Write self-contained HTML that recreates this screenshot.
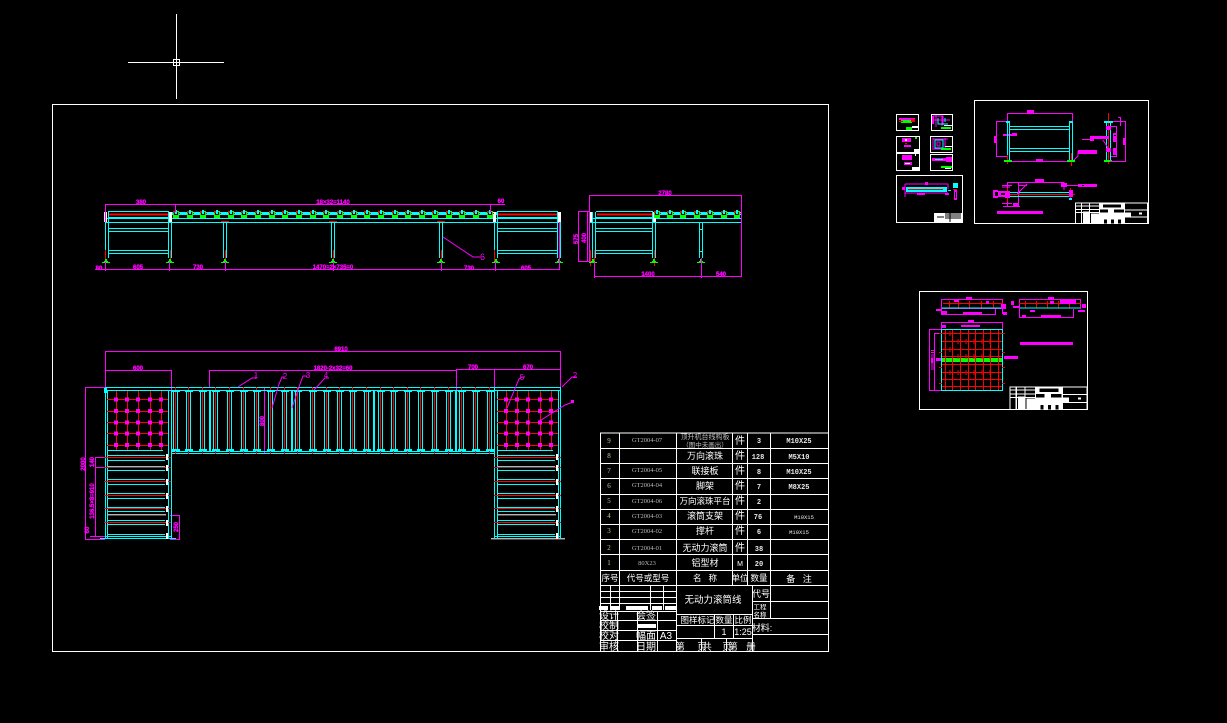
<!DOCTYPE html>
<html><head><meta charset="utf-8"><style>
html,body{margin:0;padding:0;background:#000;width:1227px;height:723px;overflow:hidden}
svg{display:block}
.t{font-family:"Liberation Sans","WenQuanYi Zen Hei","Noto Sans CJK SC",sans-serif;fill:#fff;text-anchor:middle;font-size:9px}
.c{font-family:"Liberation Serif",serif;fill:#b8b8b8;text-anchor:middle;font-size:6.5px}
.n{font-family:"Liberation Serif",serif;fill:#c8c8a0;text-anchor:middle;font-size:7px}
.m{font-family:"Liberation Mono",monospace;fill:#e8e8e8;text-anchor:middle;font-size:7px;font-weight:bold}
.d{font-family:"Liberation Sans",sans-serif;fill:#f0f;stroke:#f0f;stroke-width:.3px;text-anchor:middle;font-size:6px;font-weight:bold}
.l{font-family:"Liberation Sans",sans-serif;fill:#f0f;text-anchor:middle;font-size:8px}
</style></head><body>
<svg width="1227" height="723" viewBox="0 0 1227 723" xmlns="http://www.w3.org/2000/svg" fill="none" stroke-width="1">
<defs>
<g id="r" shape-rendering="crispEdges">
<rect x="-3" y="-4" width="6" height="7" fill="#0f0"/><rect x="-2" y="-3" width="4" height="3" fill="#000"/><rect x="-1" y="-5" width="2" height="4" fill="#0ff"/><rect x="-3" y="-4" width="2" height="2" fill="#f00"/><rect x="3" y="-2" width="1" height="1" fill="#f00"/>
</g>
<g id="f" shape-rendering="crispEdges"><rect x="-4" y="2" width="8" height="1" fill="#0f0"/><rect x="-2" y="1" width="4" height="1" fill="#0f0"/><rect x="-1" y="-1" width="2" height="3" fill="#0f0"/></g>
<g id="c" shape-rendering="crispEdges">
<path d="M-2.5 390V451M1.5 390V451" stroke="#0ff"/><path d="M-.5 387V454" stroke="#f00"/>
<rect x="-4" y="390" width="8" height="2" fill="#0ff"/><rect x="-4" y="449" width="8" height="2" fill="#0ff"/>
</g>
<rect id="s" x="-2" y="-2" width="4" height="4" fill="#f0f"/>
<g id="grid" shape-rendering="crispEdges">
<path d="M0 399.5H61M0 411.5H61M0 422.5H61M0 433.5H61M0 445.5H61M9.5 391V451M20.5 391V451M31.5 391V451M43.5 391V451M54.5 391V451" stroke="#f00"/>
<use href="#s" x="9" y="399.5"/><use href="#s" x="20" y="399.5"/><use href="#s" x="31" y="399.5"/><use href="#s" x="43" y="399.5"/><use href="#s" x="54" y="399.5"/>
<use href="#s" x="9" y="411"/><use href="#s" x="20" y="411"/><use href="#s" x="31" y="411"/><use href="#s" x="43" y="411"/><use href="#s" x="54" y="411"/>
<use href="#s" x="9" y="422.5"/><use href="#s" x="20" y="422.5"/><use href="#s" x="31" y="422.5"/><use href="#s" x="43" y="422.5"/><use href="#s" x="54" y="422.5"/>
<use href="#s" x="9" y="433.5"/><use href="#s" x="20" y="433.5"/><use href="#s" x="31" y="433.5"/><use href="#s" x="43" y="433.5"/><use href="#s" x="54" y="433.5"/>
<use href="#s" x="9" y="445"/><use href="#s" x="20" y="445"/><use href="#s" x="31" y="445"/><use href="#s" x="43" y="445"/><use href="#s" x="54" y="445"/>
</g>
<g id="rows" shape-rendering="crispEdges">
<path d="M3 450.5H58M3 455.5H60M3 460.5H60M3 466.5H60M3 470.5H60M3 479.5H60M3 484.5H60M3 493.5H60M3 498.5H60M3 507.5H60M3 511.5H60M3 520.5H60M3 524.5H60M3 534.5H60M3 538.5H60" stroke="#0ff"/>
<path d="M-1 457.5H66M-1 467.5H66M-1 481.5H66M-1 495.5H66M-1 508.5H66M3 515.5H61M-1 522.5H66" stroke="#f00"/>
<path d="M3 514.5H61" stroke="#0ff"/>
<rect x="61" y="454" width="2" height="6" fill="#fff"/><rect x="61" y="465" width="2" height="6" fill="#fff"/><rect x="61" y="479" width="2" height="6" fill="#fff"/><rect x="61" y="493" width="2" height="6" fill="#fff"/><rect x="61" y="506" width="2" height="6" fill="#fff"/><rect x="61" y="520" width="2" height="6" fill="#fff"/><rect x="61" y="533" width="2" height="6" fill="#fff"/>
</g>
<g id="sec" shape-rendering="crispEdges">
<path d="M.5 212V258M3.5 212V258M63.5 218V258M66.5 218V258" stroke="#0ff"/>
<path d="M3 211.5H63M3 217.5H66M3 228.5H63M3 231.5H63M3 250.5H63M3 253.5H63M63.5 211V217" stroke="#0ff"/>
<path d="M4 214.5H63" stroke="#f00" stroke-width="2"/>
<path d="M.5 250V262M65.5 250V262" stroke="#f00"/>
<rect x="-1" y="212" width="3" height="10" fill="#fff"/><rect x="64" y="212" width="3" height="10" fill="#fff"/>
</g>
<g id="tb" shape-rendering="crispEdges">
<path d="M.5 0V21M72.5 0V21M0 .5H73M0 7H24M0 10H24M0 3.5H24M6.5 0V21M14.5 0V21M24.5 0V21M49.5 0V21M0 21H73M50 7.5H73M50 14.5H73" stroke="#fff"/>
<rect x="8" y="9" width="6" height="12" fill="#fff"/><rect x="16" y="11" width="8" height="10" fill="#fff"/>
<rect x="25" y="0" width="24" height="16" fill="#fff"/><rect x="28" y="2" width="18" height="3" fill="#000"/><rect x="25" y="7" width="8" height="3" fill="#000"/><rect x="39" y="7" width="10" height="3" fill="#000"/>
<rect x="25" y="16" width="24" height="5" fill="#fff"/><rect x="29" y="17" width="3" height="4" fill="#000"/><rect x="36" y="17" width="3" height="4" fill="#000"/><rect x="43" y="17" width="3" height="4" fill="#000"/>
<rect x="50" y="10" width="6" height="4" fill="#fff"/><rect x="64" y="10" width="3" height="2" fill="#fff"/>
</g>
</defs>
<rect width="1227" height="723" fill="#000"/>

<!-- crosshair -->
<g stroke="#fff" shape-rendering="crispEdges"><path d="M128 62.5H224M176.5 14V99"/><rect x="173.5" y="59.5" width="6" height="6"/></g>

<!-- sheet frame -->
<rect x="52.5" y="104.5" width="776" height="547" stroke="#fff" shape-rendering="crispEdges"/>

<!-- ELEVATION 1 -->
<g shape-rendering="crispEdges">
<rect x="170" y="212" width="327" height="3" fill="#0ff"/>
<path d="M105 218.5H561M105 222.5H561" stroke="#0ff"/>
<path d="M223.5 222V258M226.5 222V258M331.5 222V258M334.5 222V258M439.5 222V258M442.5 222V258" stroke="#0ff"/>
<path d="M225.5 250V262M333.5 250V262M441.5 250V262M221 221.5H229M329 221.5H337M437 221.5H445" stroke="#f00"/>
</g>
<use href="#sec" x="105"/><use href="#sec" x="494"/>
<use href="#r" x="176" y="215"/><use href="#r" x="190" y="215"/><use href="#r" x="203" y="215"/><use href="#r" x="217" y="215"/><use href="#r" x="231" y="215"/><use href="#r" x="244" y="215"/><use href="#r" x="258" y="215"/><use href="#r" x="272" y="215"/><use href="#r" x="285" y="215"/><use href="#r" x="299" y="215"/><use href="#r" x="313" y="215"/><use href="#r" x="326" y="215"/><use href="#r" x="340" y="215"/><use href="#r" x="354" y="215"/><use href="#r" x="367" y="215"/><use href="#r" x="381" y="215"/><use href="#r" x="395" y="215"/><use href="#r" x="408" y="215"/><use href="#r" x="422" y="215"/><use href="#r" x="435" y="215"/><use href="#r" x="449" y="215"/><use href="#r" x="462" y="215"/><use href="#r" x="476" y="215"/><use href="#r" x="490" y="215"/>
<use href="#f" x="106" y="260"/><use href="#f" x="170" y="260"/><use href="#f" x="225" y="260"/><use href="#f" x="333" y="260"/><use href="#f" x="441" y="260"/><use href="#f" x="496" y="260"/><use href="#f" x="559" y="260"/>
<g stroke="#f0f" shape-rendering="crispEdges"><path d="M105 204.5H490M105.5 204V222M175.5 204V212M490.5 204V212M488 204.5H505M95 269.5H560M105.5 262V271M169.5 262V271M225.5 262V271M333.5 262V271M441.5 262V271M495.5 262V271M559.5 222V270"/></g>
<text class="d" x="141" y="204">380</text><text class="d" x="333" y="204">18×32=1140</text><text class="d" x="501" y="203">60</text><text class="d" x="99" y="270">80</text><text class="d" x="138" y="269">605</text><text class="d" x="198" y="269">730</text><text class="d" x="333" y="269">1470=2×735=0</text><text class="d" x="469" y="270">730</text><text class="d" x="526" y="270">605</text>
<path d="M443 237L473 257H480" stroke="#f0f"/><text class="l" x="482.5" y="260" style="font-size:9px">6</text>

<!-- ELEVATION 2 -->
<g shape-rendering="crispEdges">
<rect x="656" y="212" width="85" height="3" fill="#0ff"/>
<path d="M589 218.5H741M589 222.5H741" stroke="#0ff"/>
<path d="M592.5 212V258M595.5 212V258M699.5 222V258M702.5 222V258" stroke="#0ff"/>
<path d="M596 211.5H652M596 217.5H655M596 228.5H652M596 231.5H652M596 250.5H652M596 253.5H652M652.5 211V258M655.5 218V258M699 229.5H703M699 251.5H703" stroke="#0ff"/>
<path d="M597 214.5H652" stroke="#f00" stroke-width="2"/>
<path d="M590.5 250V266M594.5 250V262M654.5 250V266" stroke="#f00"/>
<rect x="589" y="212" width="3" height="10" fill="#fff"/><rect x="653" y="212" width="3" height="10" fill="#fff"/>
</g>
<use href="#r" x="657" y="215"/><use href="#r" x="670" y="215"/><use href="#r" x="683" y="215"/><use href="#r" x="697" y="215"/><use href="#r" x="710" y="215"/><use href="#r" x="724" y="215"/><use href="#r" x="737" y="215"/>
<use href="#f" x="593" y="260"/><use href="#f" x="654" y="260"/><use href="#f" x="701" y="260"/>
<g stroke="#f0f" shape-rendering="crispEdges"><path d="M589 195.5H741M589.5 195V262M741.5 195V277M578.5 211V262M578 211.5H590M578 261.5H590M587.5 211V262M594 276.5H741M594.5 262V278M701.5 258V278"/></g>
<text class="d" x="665" y="195">2780</text><text class="d" x="578" y="239" transform="rotate(-90 578 239)">575</text><text class="d" x="586" y="238" transform="rotate(-90 586 238)">400</text><text class="d" x="648" y="276">1400</text><text class="d" x="721" y="276">540</text>

<!-- PLAN -->
<g stroke="#f0f" shape-rendering="crispEdges"><path d="M105 351.5H560M105.5 351V388M105 370.5H172M171.5 370V390M209.5 370V388M209 370.5H456M456.5 369V390M456 369.5H560M494.5 369V388M560.5 351V388M85.5 387V539M85 387.5H107M85 539.5H105M95.5 457V536M95 457.5H105M95 467.5H105M90 536.5H105M170 515.5H179M179.5 515V540M170 539.5H179M250 387.5H264M250 453.5H264M264.5 387V454"/></g>
<text class="d" x="341" y="351">6910</text><text class="d" x="138" y="370">600</text><text class="d" x="333" y="370">1820-2x32=60</text><text class="d" x="473" y="369">700</text><text class="d" x="528" y="369">670</text>
<text class="d" x="85" y="464" transform="rotate(-90 85 464)">2000</text><text class="d" x="94" y="462" transform="rotate(-90 94 462)">140</text><text class="d" x="94" y="501" transform="rotate(-90 94 501)">136.5×8=910</text><text class="d" x="89" y="530" transform="rotate(-90 89 530)">60</text><text class="d" x="178" y="527" transform="rotate(-90 178 527)">250</text><text class="d" x="264" y="421" transform="rotate(-90 264 421)">800</text>
<g shape-rendering="crispEdges">
<path d="M105 387.5H561M105 390.5H561M171 451.5H495M171 453.5H495" stroke="#0ff"/>
<path d="M105.5 388V539M107.5 390V539M168.5 390V539M171.5 390V539M494.5 388V539M497.5 390V539M558.5 390V539M560.5 388V539M100 538.5H176M491 538.5H565M105 536.5H172M494 536.5H561" stroke="#0ff"/>
<path d="M491 539.5H565" stroke="#f00"/>
<rect x="104" y="388" width="3" height="5" fill="#0ff"/>
</g>
<use href="#c" x="176" y="0"/><use href="#c" x="189" y="0"/><use href="#c" x="203" y="0"/><use href="#c" x="216" y="0"/><use href="#c" x="230" y="0"/><use href="#c" x="244" y="0"/><use href="#c" x="257" y="0"/><use href="#c" x="271" y="0"/><use href="#c" x="285" y="0"/><use href="#c" x="298" y="0"/><use href="#c" x="313" y="0"/><use href="#c" x="327" y="0"/><use href="#c" x="340" y="0"/><use href="#c" x="353" y="0"/><use href="#c" x="367" y="0"/><use href="#c" x="381" y="0"/><use href="#c" x="394" y="0"/><use href="#c" x="408" y="0"/><use href="#c" x="421" y="0"/><use href="#c" x="435" y="0"/><use href="#c" x="449" y="0"/><use href="#c" x="462" y="0"/><use href="#c" x="476" y="0"/><use href="#c" x="490" y="0"/>
<g shape-rendering="crispEdges"><rect x="209" y="390" width="2" height="61" fill="#0ff"/><rect x="291" y="390" width="2" height="61" fill="#0ff"/><rect x="373" y="390" width="2" height="61" fill="#0ff"/><rect x="455" y="390" width="2" height="61" fill="#0ff"/></g>
<use href="#grid" x="107"/><use href="#grid" x="497"/>
<use href="#rows" x="105"/><use href="#rows" x="495"/>
<g stroke="#f0f"><path d="M238 387L252 378H256M256 375V379M272 408L279 384L282 377H285M292 408L300 384L303 376H307M314 390L325 378H329M507 408L519 379L522 377H525M562 387L572 377H577M538 422L565 405L573 402"/></g>
<text class="l" x="256" y="378">1</text><text class="l" x="285" y="379">2</text><text class="l" x="308" y="378">3</text><text class="l" x="326" y="378">4</text><text class="l" x="522" y="380">5</text><text class="l" x="575" y="378">2</text>
<rect x="571" y="400" width="3" height="3" fill="#f0f"/>

<!-- TABLE -->
<g stroke="#fff" shape-rendering="crispEdges">
<path d="M600.5 433H828.5V651.5H600.5ZM600 448.5H828M600 463.5H828M600 478.5H828M600 494.5H828M600 509.5H828M600 524.5H828M600 539.5H828M600 554.5H828M600 570.5H828M600 585.5H828"/>
<path d="M619.5 433V585M676.5 433V651M732.5 433V585M747.5 433V585M770.5 433V618"/>
<path d="M600 591.5H677M600 597.5H677M600 603.5H677M610.5 585V610M619.5 585V610M650.5 585V610M663.5 585V610M600 611.5H677M600 620.5H677M600 630.5H677M600 640.5H677M617.5 611V651M637.5 611V651M657.5 611V651"/>
<path d="M752.5 585V651M677 614.5H752M677 625.5H752M677 638.5H752M714.5 614V638M733.5 614V638M701.5 638V651M726.5 638V651M752 601.5H828M752 618.5H828M752 634.5H828"/>
</g>
<g shape-rendering="crispEdges" fill="#fff"><rect x="599" y="606" width="9" height="4"/><rect x="611" y="606" width="8" height="4"/><rect x="626" y="606" width="22" height="4"/><rect x="652" y="606" width="10" height="4"/><rect x="665" y="606" width="11" height="4"/><rect x="637" y="624" width="19" height="4"/></g>
<g>
<text class="t" x="705" y="439" style="font-size:7px;fill:#bbb">顶升机台线构板</text><text class="t" x="705" y="447" style="font-size:6.5px;fill:#bbb">（图中未画出）</text>
<text class="t" x="705" y="459">万向滚珠</text><text class="t" x="705" y="474">联接板</text><text class="t" x="705" y="489">脚架</text><text class="t" x="705" y="504" style="font-size:8.5px">万向滚珠平台</text><text class="t" x="705" y="519">滚筒支架</text><text class="t" x="705" y="534">撑杆</text><text class="t" x="705" y="551">无动力滚筒</text><text class="t" x="705" y="566">铝型材</text>
<text class="t" x="740" y="444" style="font-size:10px">件</text><text class="t" x="740" y="459" style="font-size:10px">件</text><text class="t" x="740" y="474" style="font-size:10px">件</text><text class="t" x="740" y="489" style="font-size:10px">件</text><text class="t" x="740" y="504" style="font-size:10px">件</text><text class="t" x="740" y="519" style="font-size:10px">件</text><text class="t" x="740" y="534" style="font-size:10px">件</text><text class="t" x="740" y="551" style="font-size:10px">件</text><text class="t" x="740" y="566" style="font-size:7px">M</text>
<text class="n" x="609" y="443">9</text><text class="n" x="609" y="458">8</text><text class="n" x="609" y="473">7</text><text class="n" x="609" y="488">6</text><text class="n" x="609" y="503">5</text><text class="n" x="609" y="518">4</text><text class="n" x="609" y="533">3</text><text class="n" x="609" y="550">2</text><text class="n" x="609" y="565">1</text>
<text class="c" x="647" y="442">GT2004-07</text><text class="c" x="647" y="472">GT2004-05</text><text class="c" x="647" y="487">GT2004-04</text><text class="c" x="647" y="503">GT2004-06</text><text class="c" x="647" y="518">GT2004-03</text><text class="c" x="647" y="533">GT2004-02</text><text class="c" x="647" y="550">GT2004-01</text><text class="c" x="647" y="565">80X23</text>
<text class="m" x="759" y="443">3</text><text class="m" x="758" y="459">128</text><text class="m" x="759" y="474">8</text><text class="m" x="759" y="489">7</text><text class="m" x="759" y="504">2</text><text class="m" x="758" y="519">76</text><text class="m" x="759" y="534">6</text><text class="m" x="759" y="551">38</text><text class="m" x="759" y="566">20</text>
<text class="m" x="799" y="443">M10X25</text><text class="m" x="799" y="459">M5X10</text><text class="m" x="799" y="474">M10X25</text><text class="m" x="799" y="489">M8X25</text><text class="m" x="804" y="519" style="font-size:5.5px;font-weight:normal">M10X15</text><text class="m" x="799" y="534" style="font-size:5.5px;font-weight:normal">M10X15</text>
<text class="t" x="610" y="581" style="font-size:8.5px">序号</text><text class="t" x="648" y="581" style="font-size:8.5px">代号或型号</text><text class="t" x="705" y="581" style="font-size:8.5px">名&#160;&#160;&#160;称</text><text class="t" x="740" y="581" style="font-size:8.5px">单位</text><text class="t" x="759" y="581" style="font-size:8.5px">数量</text><text class="t" x="799" y="582">备&#160;&#160;&#160;注</text>
<text class="t" x="713" y="603" style="font-size:9.5px">无动力滚筒线</text>
<text class="t" x="761" y="597">代号</text><text class="t" x="760" y="609" style="font-size:6.5px">工程</text><text class="t" x="760" y="617" style="font-size:6.5px">名称</text><text class="t" x="762" y="631">材料:</text>
<text class="t" x="609" y="619" style="font-size:10px">设计</text><text class="t" x="609" y="629" style="font-size:10px">校制</text><text class="t" x="609" y="639" style="font-size:10px">校对</text><text class="t" x="609" y="650" style="font-size:10px">审核</text>
<text class="t" x="646" y="619" style="font-size:10px">会签</text><text class="t" x="646" y="639" style="font-size:10px">幅面</text><text class="t" x="666" y="639" style="font-size:10px">A3</text><text class="t" x="646" y="650" style="font-size:10px">日期</text>
<text class="t" x="689" y="623" style="font-size:8.5px">图样</text><text class="t" x="706" y="623" style="font-size:8.5px">标记</text><text class="t" x="724" y="623" style="font-size:8.5px">数量</text><text class="t" x="743" y="623" style="font-size:8.5px">比例</text>
<text class="t" x="724" y="635">1</text><text class="t" x="743" y="635">1:25</text>
<text class="t" x="680" y="650" style="font-size:9.5px">第</text><text class="t" x="702" y="650" style="font-size:9.5px">页</text><text class="t" x="707" y="650" style="font-size:9.5px">共</text><text class="t" x="727" y="650" style="font-size:9.5px">页</text><text class="t" x="733" y="650" style="font-size:9.5px">第</text><text class="t" x="751" y="650" style="font-size:9.5px">册</text>
</g>

<!-- SMALL THUMBS -->
<g stroke="#fff" shape-rendering="crispEdges"><rect x="896.5" y="114.5" width="22" height="16"/><rect x="931.5" y="114.5" width="21" height="16"/><rect x="896.5" y="136.5" width="23" height="16"/><rect x="930.5" y="136.5" width="22" height="16"/><rect x="896.5" y="153.5" width="23" height="17"/><rect x="930.5" y="154.5" width="22" height="16"/><rect x="896.5" y="175.5" width="66" height="47"/></g>
<g shape-rendering="crispEdges">
<rect x="899" y="118" width="16" height="2" fill="#f0f"/><rect x="901" y="120" width="11" height="3" fill="#0f0"/><rect x="911" y="119" width="4" height="3" fill="#f00"/><rect x="899" y="121" width="4" height="1" fill="#f00"/><rect x="906" y="127" width="6" height="3" fill="#0f0"/><rect x="912" y="126" width="6" height="2" fill="#fff"/>
<path d="M933 116H943V125M933 120H950M936 115V127M942 116V126" stroke="#f0f"/><path d="M938 118V124H948M945 118V122" stroke="#0ff"/><rect x="932" y="116" width="2" height="8" fill="#f0f"/><rect x="941" y="127" width="10" height="2" fill="#0f0"/><rect x="944" y="125" width="8" height="1" fill="#fff"/>
<rect x="902" y="138" width="9" height="4" fill="#f0f"/><rect x="905" y="139" width="2" height="2" fill="#fff"/><rect x="904" y="145" width="7" height="2" fill="#f0f"/><rect x="905" y="143" width="2" height="1" fill="#f00"/><rect x="914" y="149" width="5" height="3" fill="#fff"/><rect x="915" y="137" width="2" height="2" fill="#0f0"/>
<rect x="902" y="155" width="10" height="5" fill="#f0f"/><rect x="904" y="162" width="8" height="3" fill="#f0f"/><rect x="905" y="163" width="5" height="1" fill="#fff"/><rect x="912" y="167" width="7" height="3" fill="#fff"/><rect x="915" y="154" width="1" height="2" fill="#fff"/>
<path d="M933 138V150M945 138V150M933 139H948M934 149H948" stroke="#f0f"/><rect x="935" y="140" width="8" height="8" stroke="#0ff"/><rect x="937" y="142" width="3" height="4" stroke="#f0f"/><rect x="941" y="148" width="10" height="2" fill="#0f0"/><rect x="945" y="146" width="7" height="1" fill="#fff"/>
<rect x="932" y="158" width="14" height="3" fill="#f0f"/><rect x="935" y="159" width="8" height="1" fill="#0ff"/><rect x="946" y="157" width="6" height="5" fill="#f0f"/><rect x="941" y="166" width="11" height="2" fill="#0f0"/><rect x="945" y="168" width="6" height="1" fill="#fff"/>
<path d="M905 184H948V189M905 193H948M905 184V197" stroke="#f0f"/><rect x="906" y="187" width="41" height="5" fill="#0ff"/><rect x="908" y="189" width="35" height="1" fill="#f00"/><rect x="925" y="182" width="3" height="3" fill="#f0f"/><rect x="902" y="187" width="3" height="3" fill="#f0f"/><rect x="917" y="193" width="8" height="2" fill="#f0f"/><rect x="945" y="193" width="4" height="2" fill="#f0f"/><rect x="953" y="183" width="5" height="5" fill="#0ff"/><rect x="954" y="190" width="3" height="10" fill="#f0f"/><rect x="955" y="192" width="1" height="6" fill="#000"/><rect x="948" y="190" width="3" height="1" fill="#0ff"/><rect x="953" y="189" width="4" height="1" fill="#f00"/>
<rect x="934" y="213" width="28" height="9" fill="#fff"/><rect x="945" y="219" width="8" height="4" fill="#fff"/><path d="M945 214H961M945 216H961M945 218H961M950 213V222M937 217H944" stroke="#000"/>
</g>

<!-- BIG THUMB -->
<rect x="974.5" y="100.5" width="174" height="123" stroke="#fff" shape-rendering="crispEdges"/>
<g shape-rendering="crispEdges">
<path d="M1007 113.5H1073M1007.5 113V121M1072.5 113V121M996.5 121V157M996 121.5H1008M996 156.5H1008M1008 161.5H1073" stroke="#f0f"/>
<rect x="1027" y="110" width="7" height="4" fill="#f0f"/><rect x="1003" y="134" width="14" height="2" fill="#f0f"/><rect x="1012" y="133" width="5" height="2" fill="#f0f"/><rect x="994" y="136" width="3" height="7" fill="#f0f"/><rect x="1036" y="159" width="7" height="2" fill="#f0f"/>
<path d="M1007.5 121V160M1009.5 121V160M1069.5 121V160M1072.5 121V160M1010 126.5H1069M1010 129.5H1069M1010 148.5H1069M1010 151.5H1069" stroke="#0ff"/>
<rect x="1006" y="121" width="4" height="2" fill="#0ff"/><rect x="1069" y="121" width="4" height="2" fill="#0ff"/>
<path d="M1007.5 155V164M1071.5 153V166M1108.5 113V164" stroke="#f00"/>
<rect x="1004" y="160" width="8" height="2" fill="#0f0"/><rect x="1067" y="160" width="8" height="2" fill="#0f0"/><rect x="1104" y="160" width="8" height="2" fill="#0f0"/>
<rect x="1104" y="121" width="9" height="2" fill="#0ff"/><path d="M1106.5 123V160M1110.5 123V160" stroke="#0ff"/>
<rect x="1106" y="126" width="5" height="4" fill="#f0f"/><rect x="1106" y="148" width="5" height="4" fill="#f0f"/>
<path d="M1111 126.5H1117M1116.5 126V156M1111 156.5H1117M1113 121.5H1126M1125.5 121V161M1110 161.5H1126M1120.5 117V126M1118 117.5H1121M1082 139.5H1090M1103 140L1108 148" stroke="#f0f"/>
<rect x="1090" y="136" width="19" height="3" fill="#f0f"/><rect x="1090" y="138" width="4" height="3" fill="#f0f"/><rect x="1113" y="133" width="4" height="9" fill="#f0f"/><rect x="1114" y="135" width="2" height="1" fill="#000"/><rect x="1113" y="148" width="4" height="7" fill="#f0f"/><rect x="1123" y="138" width="3" height="7" fill="#f0f"/>
<path d="M1078 151V156L1074 160" stroke="#f0f"/><rect x="1078" y="150" width="16" height="4" fill="#f0f"/><rect x="1094" y="150" width="3" height="4" fill="#f0f"/>
<path d="M1007 182.5H1064M1007.5 182V207M1018.5 182V207M1002 185.5H1012M1002 203.5H1012M1003 206.5H1020M1064 182V190M1067 185.5H1078M1002 187H1010M1018 194H1020" stroke="#f0f"/>
<rect x="1035" y="179" width="9" height="3" fill="#f0f"/>
<path d="M1007 192.5H1072M1007 196.5H1072" stroke="#0ff"/><path d="M1007 194.5H1075M1070.5 188V200M1007.5 188V202" stroke="#f00"/>
<rect x="993" y="190" width="5" height="8" fill="#f0f"/><rect x="995" y="192" width="3" height="4" fill="#000"/><rect x="998" y="191" width="8" height="6" fill="#f0f"/><rect x="1001" y="193" width="4" height="2" fill="#000"/><rect x="1005" y="191" width="5" height="7" fill="#f0f"/><rect x="1069" y="190" width="4" height="7" fill="#f0f"/><rect x="1069" y="198" width="3" height="2" fill="#0ff"/>
<rect x="1078" y="184" width="19" height="3" fill="#f0f"/><rect x="1082" y="185" width="2" height="1" fill="#000"/><rect x="1018" y="185" width="9" height="1" fill="#f0f"/><path d="M1017 194L1027 184" stroke="#f0f"/><rect x="1061" y="183" width="6" height="4" fill="#f0f"/><rect x="1013" y="203" width="5" height="3" fill="#f0f"/>
<rect x="997" y="211" width="46" height="3" fill="#f0f"/>
</g>
<use href="#tb" transform="translate(1075 202.3)"/>

<!-- THIRD THUMB -->
<rect x="919.5" y="291.5" width="168" height="118" stroke="#fff" shape-rendering="crispEdges"/>
<g shape-rendering="crispEdges">
<path d="M941 299.5H1003M941.5 299V315M1002.5 299V314M941 308.5H1003M941 314.5H995M995.5 308V315M1019 299.5H1081M1019.5 299V318M1080.5 299V309M1019 317.5H1073M1073.5 309V318" stroke="#f0f"/>
<path d="M943 303.5H1003M1019 303.5H1081" stroke="#f00"/><path d="M949.5 301V308M958.5 301V308M969.5 301V308M981.5 301V308M993.5 301V308M1025.5 301V308M1036.5 301V308M1047.5 301V308M1058.5 301V308M1069.5 301V308" stroke="#f00"/>
<path d="M942 308H1002M1020 308H1080" stroke="#0ff"/>
<rect x="966" y="297" width="6" height="2" fill="#f0f"/><rect x="1048" y="297" width="6" height="2" fill="#f0f"/><rect x="954" y="299" width="5" height="3" fill="#f0f"/><rect x="986" y="301" width="3" height="3" fill="#f0f"/><rect x="1001" y="304" width="5" height="5" fill="#f0f"/><rect x="1003" y="312" width="4" height="3" fill="#f0f"/><rect x="936" y="309" width="5" height="2" fill="#f0f"/><rect x="942" y="311" width="5" height="3" fill="#f0f"/><rect x="963" y="312" width="19" height="3" fill="#f0f"/><rect x="1011" y="301" width="3" height="4" fill="#f0f"/><rect x="1013" y="306" width="6" height="2" fill="#f0f"/><rect x="1030" y="310" width="5" height="2" fill="#f0f"/><rect x="1041" y="315" width="20" height="2" fill="#f0f"/><rect x="1060" y="300" width="16" height="4" fill="#f0f"/><rect x="1082" y="304" width="4" height="4" fill="#f0f"/><rect x="1078" y="310" width="7" height="2" fill="#f0f"/><rect x="1022" y="315" width="4" height="3" fill="#f0f"/><rect x="1050" y="301" width="4" height="3" fill="#f0f"/>
<path d="M941 322.5H1003M941.5 322V329M1002.5 322V329M929.5 329V391M929 329.5H941M929 390.5H941M934.5 333V390M934 333.5H941" stroke="#f0f"/>
<rect x="968" y="320" width="6" height="2" fill="#f0f"/><rect x="961" y="325" width="19" height="2" fill="#f0f"/><rect x="942" y="325" width="4" height="3" fill="#f0f"/>
<rect x="931" y="358" width="2" height="5" fill="#f0f"/><rect x="931" y="352" width="4" height="1" fill="#f0f"/><rect x="931" y="350" width="4" height="1" fill="#f0f"/><rect x="931" y="354" width="4" height="16" fill="#f0f" opacity=".5"/><rect x="936" y="358" width="5" height="3" fill="#f0f"/>
<rect x="941.5" y="329.5" width="61" height="61" stroke="#0ff"/>
<rect x="942" y="358" width="60" height="4" fill="#0f0"/>
<path d="M942 333.5H1002M942 341.5H1002M942 349.5H1002M942 356.5H1002M942 364.5H1002M942 372.5H1002M942 379.5H1002M942 386.5H1002M945.5 330V390M952.5 330V390M960.5 330V390M968.5 330V390M975.5 330V390M983.5 330V390M990.5 330V390M998.5 330V390" stroke="#f00"/>
<rect x="942" y="356" width="60" height="1" fill="#f00"/><rect x="942" y="364" width="60" height="1" fill="#f00"/>
<path d="M950 331V336M958 339V344M966 339V344M974 339V344M982 339V344M990 339V344M950 347V352M958 354V359M966 354V359M974 354V359M982 354V359M990 354V359M950 370V375M958 370V375M966 370V375M974 370V375M982 370V375M990 370V375" stroke="#f00"/>
<rect x="1020" y="342" width="53" height="3" fill="#f0f"/><rect x="1004" y="356" width="14" height="3" fill="#f0f"/>
<rect x="1002" y="333" width="3" height="1" fill="#f00"/><rect x="1002" y="352" width="3" height="1" fill="#f00"/><rect x="1002" y="367" width="3" height="1" fill="#f00"/><rect x="1002" y="383" width="3" height="1" fill="#f00"/>
<rect x="939" y="333" width="3" height="1" fill="#f00"/><rect x="939" y="352" width="3" height="1" fill="#f00"/><rect x="939" y="367" width="3" height="1" fill="#f00"/><rect x="939" y="383" width="3" height="1" fill="#f00"/>
</g>
<use href="#tb" transform="translate(1009.3 386.3) scale(1.07 1.11)"/>
</svg>
</body></html>
